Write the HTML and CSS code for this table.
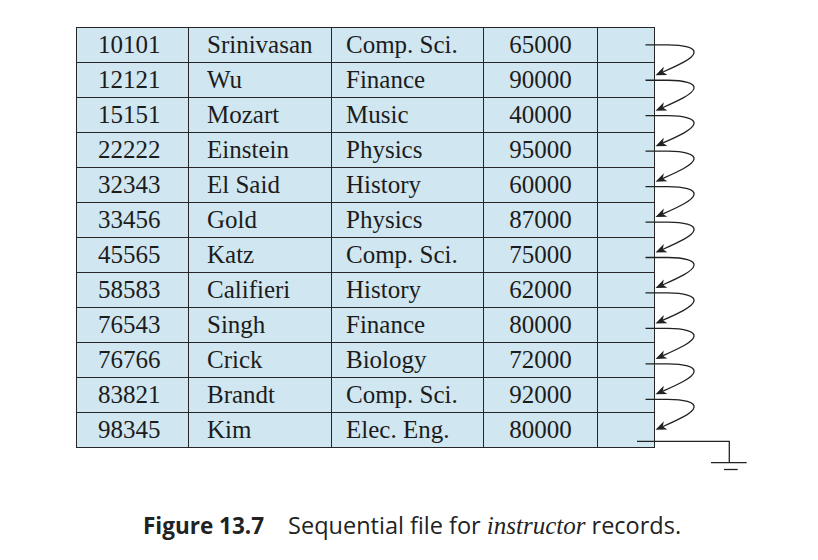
FILE: index.html
```html
<!DOCTYPE html>
<html lang="en">
<head>
<meta charset="utf-8">
<title>Sequential file for instructor records</title>
<link rel="stylesheet" href="styles.css">
</head>
<body>
<div class="figure">
  <table class="records">
    <colgroup>
      <col class="c-id"><col class="c-name"><col class="c-dept"><col class="c-sal"><col class="c-ptr">
    </colgroup>
    <tbody>
      <tr><td class="id">10101</td><td class="name">Srinivasan</td><td class="dept">Comp. Sci.</td><td class="sal">65000</td><td class="ptr"></td></tr>
      <tr><td class="id">12121</td><td class="name">Wu</td><td class="dept">Finance</td><td class="sal">90000</td><td class="ptr"></td></tr>
      <tr><td class="id">15151</td><td class="name">Mozart</td><td class="dept">Music</td><td class="sal">40000</td><td class="ptr"></td></tr>
      <tr><td class="id">22222</td><td class="name">Einstein</td><td class="dept">Physics</td><td class="sal">95000</td><td class="ptr"></td></tr>
      <tr><td class="id">32343</td><td class="name">El Said</td><td class="dept">History</td><td class="sal">60000</td><td class="ptr"></td></tr>
      <tr><td class="id">33456</td><td class="name">Gold</td><td class="dept">Physics</td><td class="sal">87000</td><td class="ptr"></td></tr>
      <tr><td class="id">45565</td><td class="name">Katz</td><td class="dept">Comp. Sci.</td><td class="sal">75000</td><td class="ptr"></td></tr>
      <tr><td class="id">58583</td><td class="name">Califieri</td><td class="dept">History</td><td class="sal">62000</td><td class="ptr"></td></tr>
      <tr><td class="id">76543</td><td class="name">Singh</td><td class="dept">Finance</td><td class="sal">80000</td><td class="ptr"></td></tr>
      <tr><td class="id">76766</td><td class="name">Crick</td><td class="dept">Biology</td><td class="sal">72000</td><td class="ptr"></td></tr>
      <tr><td class="id">83821</td><td class="name">Brandt</td><td class="dept">Comp. Sci.</td><td class="sal">92000</td><td class="ptr"></td></tr>
      <tr><td class="id">98345</td><td class="name">Kim</td><td class="dept">Elec. Eng.</td><td class="sal">80000</td><td class="ptr"></td></tr>
    </tbody>
  </table>

  <svg class="pointers" width="818" height="560" viewBox="0 0 818 560" aria-hidden="true">
    <defs>
      <g id="ptr">
        <path class="shaft" d="M645.5,0 L668,0 C684,0 695,3 694,8 C693,14 677,21 662.8,27.3"/>
        <polygon class="head" points="655.5,30.5 667.4,30.2 662.8,27.3 663.8,22"/>
      </g>
    </defs>
    <use href="#ptr" y="44.8"/>
    <use href="#ptr" y="80.25"/>
    <use href="#ptr" y="115.7"/>
    <use href="#ptr" y="151.15"/>
    <use href="#ptr" y="186.6"/>
    <use href="#ptr" y="222.05"/>
    <use href="#ptr" y="257.5"/>
    <use href="#ptr" y="292.95"/>
    <use href="#ptr" y="328.4"/>
    <use href="#ptr" y="363.85"/>
    <use href="#ptr" y="399.3"/>
    <path class="shaft" d="M637,441.3 H729.3 V462.7"/>
    <path class="shaft" d="M711,462.7 H746.7"/>
    <path class="shaft" d="M724,469.5 H737.7"/>
  </svg>

  <p class="caption"><span class="fig-num">Figure 13.7</span><span class="fig-text">Sequential file for <em class="rel">instructor</em> records.</span></p>
</div>
</body>
</html>
```

FILE: styles.css
```css
html, body {
  margin: 0;
  padding: 0;
  background: #ffffff;
}

.figure {
  position: relative;
  width: 818px;
  height: 560px;
  padding: 27px 0 0 76px;
  box-sizing: border-box;
}

.records {
  border-collapse: collapse;
  table-layout: fixed;
  width: 578px;
  background: #d0e6f0;
  font-family: "Liberation Serif", "Times New Roman", serif;
  font-size: 25px;
  color: #1c1c1c;
}

.c-id { width: 112px; }
.c-name { width: 143px; }
.c-dept { width: 152px; }
.c-sal { width: 114px; }
.c-ptr { width: 57px; }

.records td {
  border: 1.5px solid #262626;
  height: 34px;
  line-height: 34px;
  padding: 0;
  white-space: nowrap;
}

.records .id { padding-left: 21px; }
.records .name { padding-left: 18px; }
.records .dept { padding-left: 14px; }
.records .sal { text-align: center; }

.pointers {
  position: absolute;
  left: 0;
  top: 0;
  pointer-events: none;
}

.pointers .shaft {
  fill: none;
  stroke: #222222;
  stroke-width: 1.3;
}

.pointers .head {
  fill: #222222;
  stroke: none;
}

.caption {
  margin: 62px 0 0 67px;
  font-family: "Open Sans", "Noto Sans", sans-serif;
  font-size: 23.5px;
  line-height: 30px;
  color: #222222;
  white-space: nowrap;
}

.fig-num {
  font-weight: 700;
  font-size: 22.5px;
  margin-right: 24px;
}

.rel {
  font-family: "Liberation Serif", "Times New Roman", serif;
  font-style: italic;
  font-size: 25px;
}
```
